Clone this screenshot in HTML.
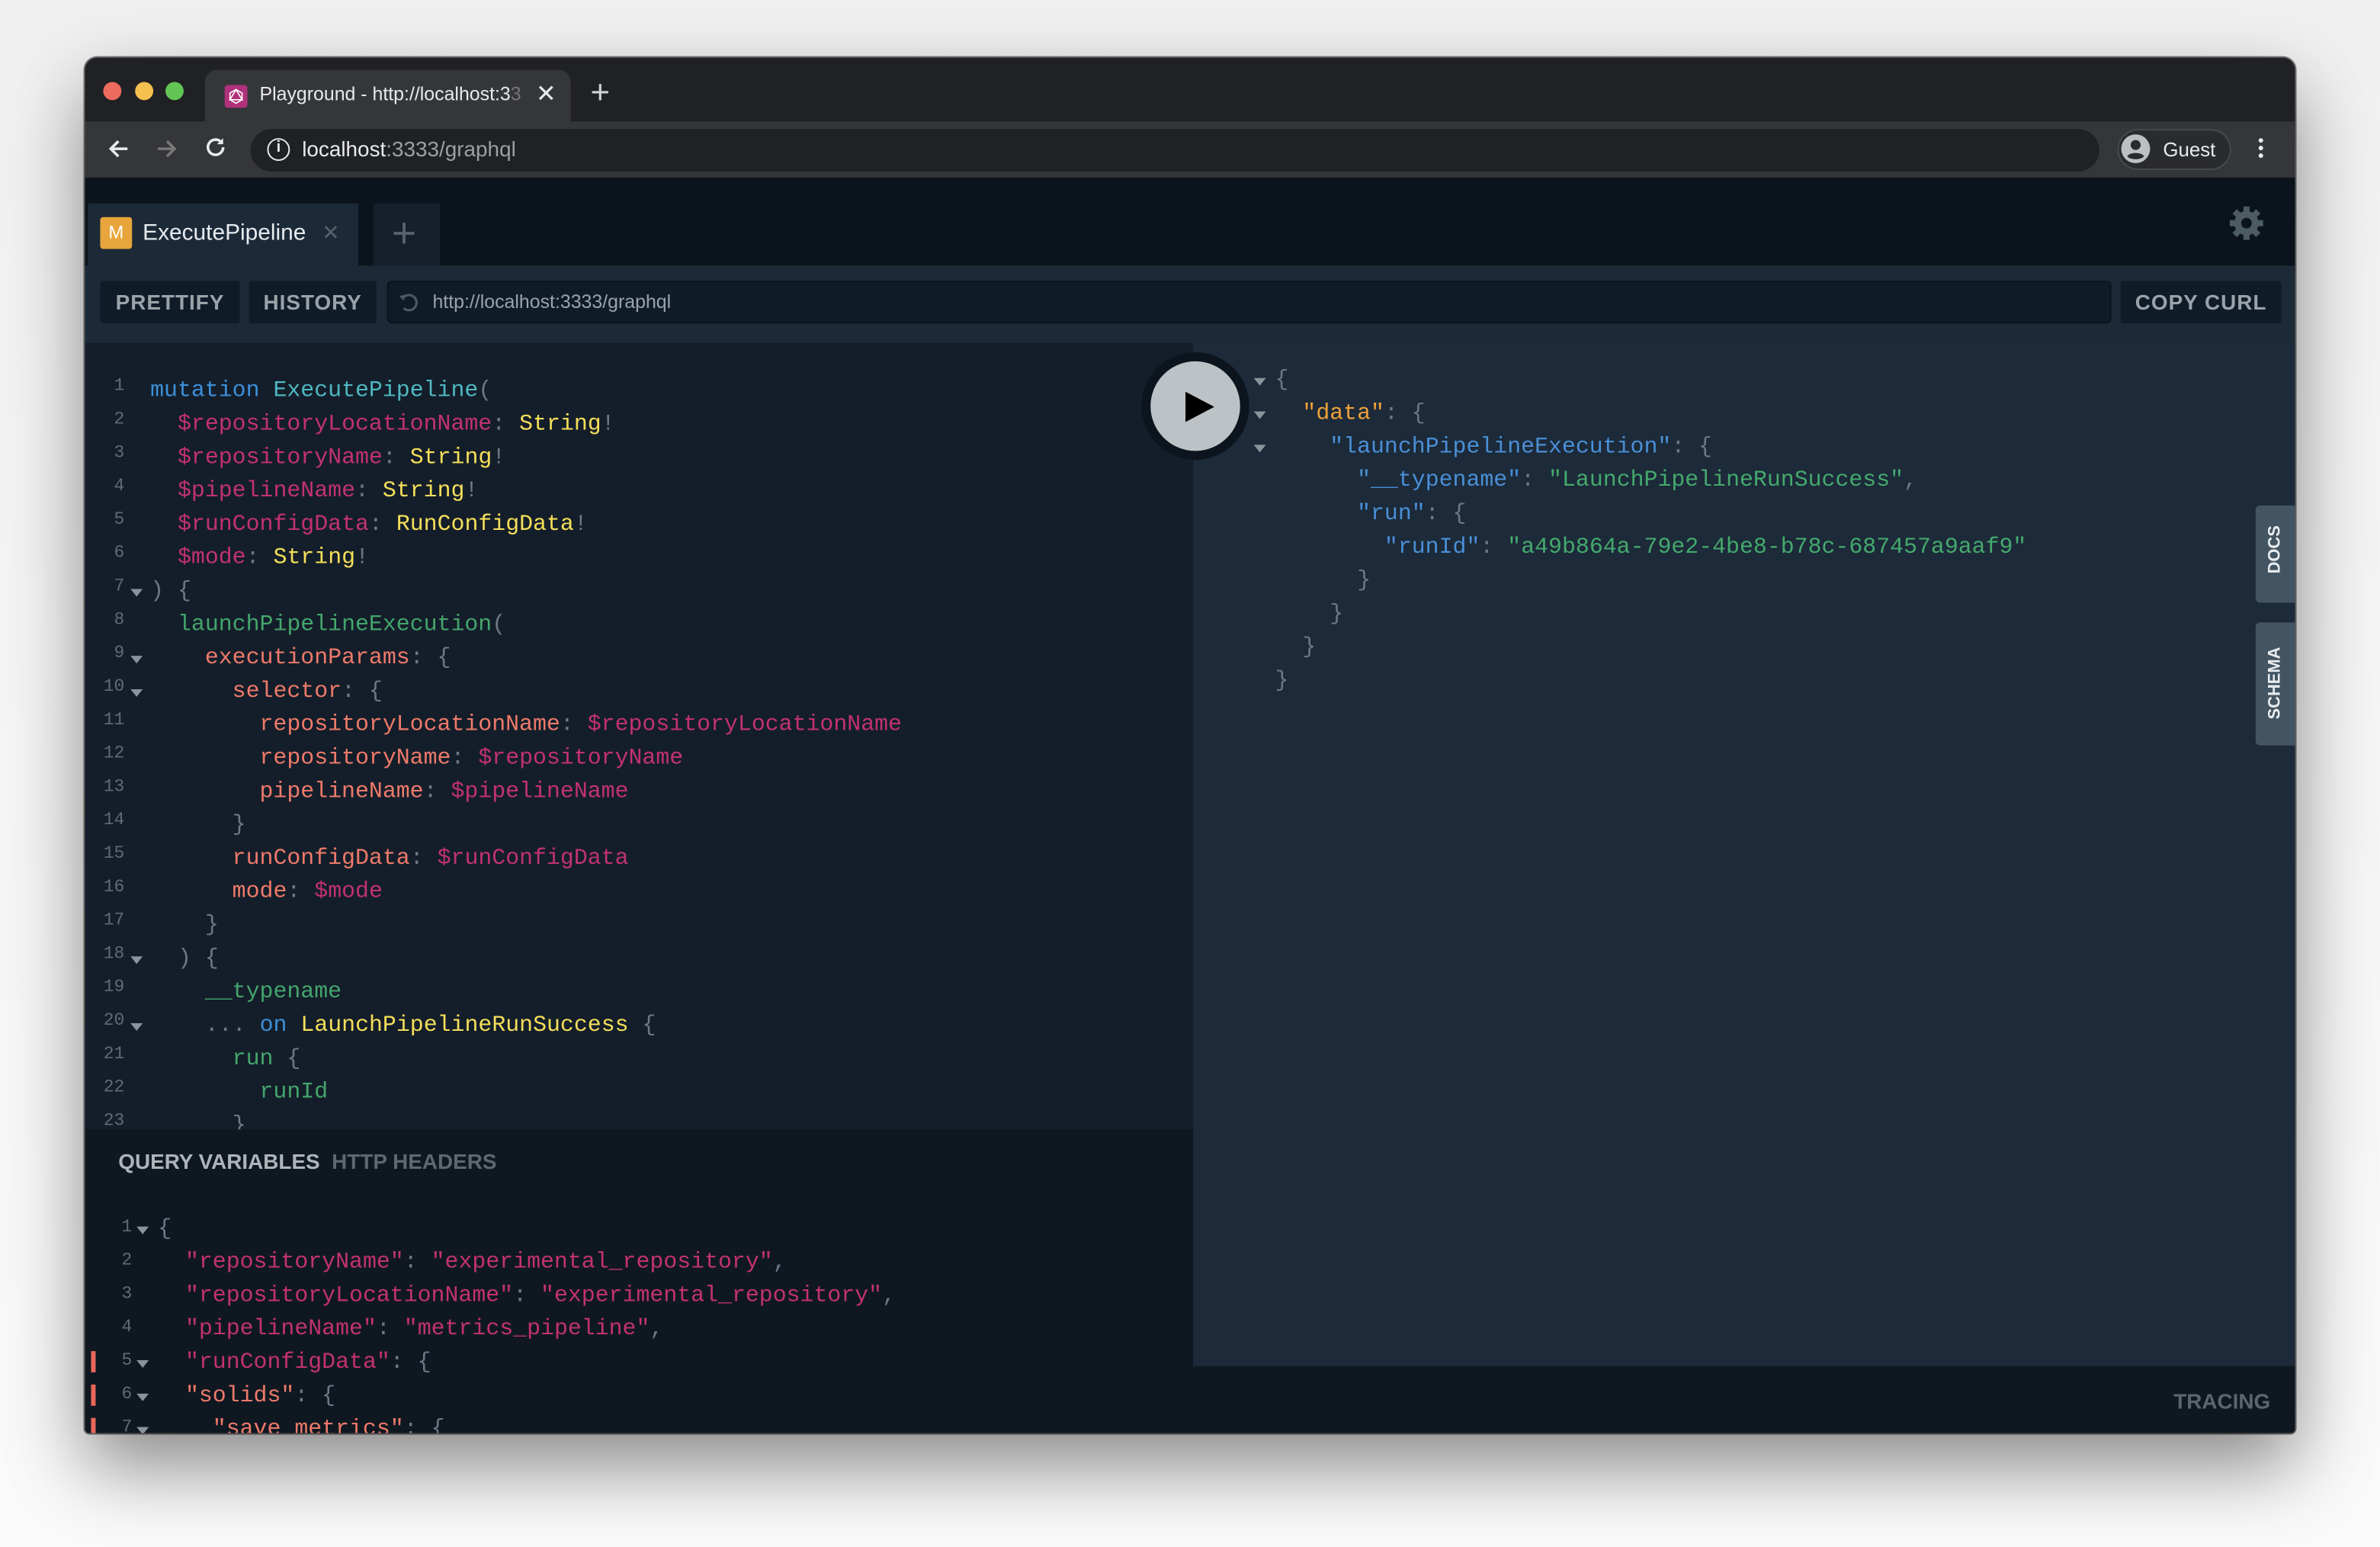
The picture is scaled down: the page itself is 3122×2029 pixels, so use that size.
<!DOCTYPE html>
<html><head><meta charset="utf-8">
<style>
*{margin:0;padding:0;box-sizing:border-box}
html,body{width:3122px;height:2028px;overflow:hidden;background:#f2f2f2}
#s{position:absolute;left:0;top:0;width:1568px;height:1019px;transform:scale(1.9911);transform-origin:0 0;font-family:"Liberation Sans",sans-serif;background:linear-gradient(#f0f0f0,#fafafa)}
.a{position:absolute}
.win{left:56px;top:38px;width:1456px;height:906px;border-radius:8px 8px 3px 3px;overflow:hidden;background:#202124;box-shadow:0 22px 50px rgba(0,0,0,.45),0 0 0 1px rgba(0,0,0,.5)}
.mono{font-family:"Liberation Mono",monospace;font-size:15px;white-space:pre;line-height:22px}
.ln{font-family:"Liberation Mono",monospace;font-size:11.5px;color:#5f6b76;width:26px;text-align:right;line-height:22px}
.k{color:#3d8fd8}.d{color:#4fb8c2}.v{color:#c2326f}.t{color:#f5df5a}.p{color:#6c7885}.f{color:#44a56c}.at{color:#ee7a6a}
.js{color:#45a96d}.jk{color:#4a8fd6}.jo{color:#eda03a}
.arr{position:absolute;width:0;height:0;border-left:4px solid transparent;border-right:4px solid transparent;border-top:5px solid #8a949c}
.btn{position:absolute;top:10px;height:28px;background:#0f1c28;border-radius:2px;color:#9aa3a9;font-weight:bold;font-size:14px;letter-spacing:.5px;line-height:28px;text-align:center}
</style></head><body><div id="s">
<div class="a win">
 <div class="a" style="left:12px;top:16px;width:12px;height:12px;border-radius:50%;background:#ed6a5e"></div>
 <div class="a" style="left:33px;top:16px;width:12px;height:12px;border-radius:50%;background:#f5bf4f"></div>
 <div class="a" style="left:53px;top:16px;width:12px;height:12px;border-radius:50%;background:#62c554"></div>
 <div class="a" style="left:79px;top:8px;width:241px;height:40px;background:#35363a;border-radius:8px 8px 0 0"></div>
 <div class="a" style="left:92px;top:18px;width:15px;height:15px;background:#b1317b;border-radius:2px"><svg width="15" height="15" viewBox="0 0 15 15"><polygon points="7.5,3 11.5,5.3 11.5,9.7 7.5,12 3.5,9.7 3.5,5.3" fill="none" stroke="#fff" stroke-width=".8"/><polygon points="7.5,3 11.5,9.7 3.5,9.7" fill="none" stroke="#fff" stroke-width=".8"/></svg></div>
 <div class="a" style="left:115px;top:17px;font-size:12.5px;color:#e8eaed;white-space:nowrap;width:174px;overflow:hidden">Playground - http://localhost:3<span style="color:#777">3</span></div>
 <div class="a" style="left:297px;top:14px;font-size:16px;color:#e8eaed">✕</div>
 <div class="a" style="left:333px;top:10px;font-size:22px;color:#cfd1d4;font-weight:300">+</div>
 <div class="a" style="left:0;top:42px;width:1456px;height:37px;background:#35363a"></div>
 <svg class="a" style="left:14px;top:52px" width="16" height="16" viewBox="0 0 16 16"><path d="M14 8H3M8 3L3 8l5 5" stroke="#e8eaed" stroke-width="1.8" fill="none"/></svg>
 <svg class="a" style="left:46px;top:52px" width="16" height="16" viewBox="0 0 16 16"><path d="M2 8h11M8 3l5 5-5 5" stroke="#777" stroke-width="1.8" fill="none"/></svg>
 <svg class="a" style="left:78px;top:51px" width="16" height="16" viewBox="0 0 16 16"><path d="M13 8a5 5 0 1 1-1.5-3.6" stroke="#e8eaed" stroke-width="1.8" fill="none"/><path d="M13 2v4h-4z" fill="#e8eaed"/></svg>
 <div class="a" style="left:109px;top:47px;width:1218px;height:28px;background:#202124;border-radius:14px"></div>
 <div class="a" style="left:120px;top:53px;width:15px;height:15px;border:1.5px solid #e8eaed;border-radius:50%;color:#e8eaed;font-size:10px;font-weight:bold;text-align:center;line-height:12px">i</div>
 <div class="a" style="left:143px;top:52px;font-size:14px;color:#e8eaed">localhost<span style="color:#9aa0a6">:3333/graphql</span></div>
 <div class="a" style="left:1339px;top:47px;width:75px;height:27px;border-radius:14px;border:1px solid #444a4f;background:#2a2b2e"></div>
 <svg class="a" style="left:1341px;top:50px" width="20" height="20" viewBox="0 0 20 20"><circle cx="10" cy="10" r="9.5" fill="#bcc0c4"/><circle cx="10" cy="7.5" r="3.3" fill="#2a2b2e"/><path d="M4.5 15c1.5-3 9.5-3 11 0c-2 2.5-9 2.5-11 0z" fill="#2a2b2e"/></svg>
 <div class="a" style="left:1369px;top:53px;font-size:13px;color:#e8eaed">Guest</div>
 <div class="a" style="left:1432px;top:53px;width:3px;height:3px;border-radius:50%;background:#e8eaed;box-shadow:0 5px 0 #e8eaed,0 10px 0 #e8eaed"></div>
 <div class="a" style="left:0;top:79px;width:1456px;height:58px;background:#0b141c"></div>
 <div class="a" style="left:2px;top:96px;width:178px;height:41px;background:#1c2a38"></div>
 <div class="a" style="left:10px;top:105px;width:21px;height:21px;background:#e8a53b;border-radius:2px;color:#fff;font-size:12px;text-align:center;line-height:21px">M</div>
 <div class="a" style="left:38px;top:107px;font-size:15px;color:#e6eaee">ExecutePipeline</div>
 <div class="a" style="left:156px;top:107px;font-size:14px;color:#55606a">✕</div>
 <div class="a" style="left:190px;top:96px;width:44px;height:41px;background:#15202b"></div>
 <div class="a" style="left:202px;top:100px;font-size:28px;color:#55616b;font-weight:300">+</div>
 <svg class="a" style="left:1412px;top:97px" width="24" height="24" viewBox="0 0 24 24"><g fill="#4d5b63"><circle cx="12" cy="12" r="8"/><rect x="10" y="1" width="4" height="22"/><rect x="1" y="10" width="22" height="4"/><rect x="10" y="1" width="4" height="22" transform="rotate(45 12 12)"/><rect x="10" y="1" width="4" height="22" transform="rotate(-45 12 12)"/></g><circle cx="12" cy="12" r="3.5" fill="#0b141c"/></svg>
 <div class="a" style="left:0;top:137px;width:1456px;height:51px;background:#1c2a38">
  <div class="btn" style="left:10px;width:92px">PRETTIFY</div>
  <div class="btn" style="left:108px;width:84px">HISTORY</div>
  <div class="a" style="left:199px;top:10px;width:1136px;height:28px;background:#0f1c28;border-radius:3px;border:1px solid #0a131b"></div>
  <svg class="a" style="left:206px;top:17px" width="15" height="15" viewBox="0 0 15 15"><path d="M3 5a5 5 0 1 1 1 6" stroke="#4d5962" stroke-width="1.6" fill="none"/><path d="M1 3l3 3 1-4z" fill="#4d5962"/></svg>
  <div class="a" style="left:229px;top:17px;font-size:12.5px;color:#9aa3a9">http://localhost:3333/graphql</div>
  <div class="btn" style="left:1341px;width:106px">COPY CURL</div>
 </div>
 <div class="a" style="left:0;top:188px;width:730px;height:518px;background:#141e2a;overflow:hidden">
  <div class="a ln" style="left:0;top:18px">1<br>2<br>3<br>4<br>5<br>6<br>7<br>8<br>9<br>10<br>11<br>12<br>13<br>14<br>15<br>16<br>17<br>18<br>19<br>20<br>21<br>22<br>23</div>
  <div class="arr" style="left:30px;top:162px"></div>
  <div class="arr" style="left:30px;top:206px"></div>
  <div class="arr" style="left:30px;top:228px"></div>
  <div class="arr" style="left:30px;top:404px"></div>
  <div class="arr" style="left:30px;top:448px"></div>
  <div class="a mono" style="left:43px;top:21px"><span class="k">mutation</span> <span class="d">ExecutePipeline</span><span class="p">(</span>
  <span class="v">$repositoryLocationName</span><span class="p">:</span> <span class="t">String</span><span class="p">!</span>
  <span class="v">$repositoryName</span><span class="p">:</span> <span class="t">String</span><span class="p">!</span>
  <span class="v">$pipelineName</span><span class="p">:</span> <span class="t">String</span><span class="p">!</span>
  <span class="v">$runConfigData</span><span class="p">:</span> <span class="t">RunConfigData</span><span class="p">!</span>
  <span class="v">$mode</span><span class="p">:</span> <span class="t">String</span><span class="p">!</span>
<span class="p">) {</span>
  <span class="f">launchPipelineExecution</span><span class="p">(</span>
    <span class="at">executionParams</span><span class="p">: {</span>
      <span class="at">selector</span><span class="p">: {</span>
        <span class="at">repositoryLocationName</span><span class="p">:</span> <span class="v">$repositoryLocationName</span>
        <span class="at">repositoryName</span><span class="p">:</span> <span class="v">$repositoryName</span>
        <span class="at">pipelineName</span><span class="p">:</span> <span class="v">$pipelineName</span>
      <span class="p">}</span>
      <span class="at">runConfigData</span><span class="p">:</span> <span class="v">$runConfigData</span>
      <span class="at">mode</span><span class="p">:</span> <span class="v">$mode</span>
    <span class="p">}</span>
  <span class="p">) {</span>
    <span class="f">__typename</span>
    <span class="p">...</span> <span class="k">on</span> <span class="t">LaunchPipelineRunSuccess</span> <span class="p">{</span>
      <span class="f">run</span> <span class="p">{</span>
        <span class="f">runId</span>
      <span class="p">}</span></div>
 </div>
 <div class="a" style="left:0;top:706px;width:730px;height:200px;background:#0f1821;overflow:hidden">
  <div class="a" style="left:22px;top:13px;font-size:14px;font-weight:bold;color:#aeb5ba">QUERY VARIABLES <span style="color:#5d6870">&nbsp;HTTP HEADERS</span></div>
  <div class="a ln" style="left:5px;top:54px">1<br>2<br>3<br>4<br>5<br>6<br>7</div>
  <div class="arr" style="left:34px;top:64px"></div>
  <div class="arr" style="left:34px;top:152px"></div>
  <div class="arr" style="left:34px;top:174px"></div>
  <div class="arr" style="left:34px;top:196px"></div>
  <div class="a" style="left:4px;top:146px;width:3px;height:14px;background:#e8675a"></div>
  <div class="a" style="left:4px;top:168px;width:3px;height:14px;background:#e8675a"></div>
  <div class="a" style="left:4px;top:190px;width:3px;height:14px;background:#e8675a"></div>
  <div class="a mono" style="left:48px;top:55px"><span class="p">{</span>
  <span class="v">"repositoryName"</span><span class="p">:</span> <span class="v">"experimental_repository"</span><span class="p">,</span>
  <span class="v">"repositoryLocationName"</span><span class="p">:</span> <span class="v">"experimental_repository"</span><span class="p">,</span>
  <span class="v">"pipelineName"</span><span class="p">:</span> <span class="v">"metrics_pipeline"</span><span class="p">,</span>
  <span class="v">"runConfigData"</span><span class="p">: {</span>
  <span class="at">"solids"</span><span class="p">: {</span>
    <span class="at">"save_metrics"</span><span class="p">: {</span></div>
 </div>
 <div class="a" style="left:730px;top:188px;width:726px;height:674px;background:#1c2a39">
  <div class="arr" style="left:40px;top:23px"></div>
  <div class="arr" style="left:40px;top:45px"></div>
  <div class="arr" style="left:40px;top:67px"></div>
  <div class="a mono" style="left:54px;top:14px"><span class="p">{</span>
  <span class="jo">"data"</span><span class="p">: {</span>
    <span class="jk">"launchPipelineExecution"</span><span class="p">: {</span>
      <span class="jk">"__typename"</span><span class="p">:</span> <span class="js">"LaunchPipelineRunSuccess"</span><span class="p">,</span>
      <span class="jk">"run"</span><span class="p">: {</span>
        <span class="jk">"runId"</span><span class="p">:</span> <span class="js">"a49b864a-79e2-4be8-b78c-687457a9aaf9"</span>
      <span class="p">}</span>
    <span class="p">}</span>
  <span class="p">}</span>
<span class="p">}</span></div>
 </div>
 <div class="a" style="left:730px;top:862px;width:726px;height:44px;background:#0f1821"></div>
 <div class="a" style="left:1376px;top:877px;font-size:14px;font-weight:bold;color:#5b666d">TRACING</div>
 <div class="a" style="left:1430px;top:295px;width:26px;height:64px;background:#435563;border-radius:3px 0 0 3px"></div>
 <div class="a" style="top:318px;font-size:11px;font-weight:bold;color:#e8ecef;transform:rotate(-90deg);width:40px;left:1423px;text-align:center">DOCS</div>
 <div class="a" style="left:1430px;top:372px;width:26px;height:81px;background:#435563;border-radius:3px 0 0 3px"></div>
 <div class="a" style="top:406px;font-size:11px;font-weight:bold;color:#e8ecef;transform:rotate(-90deg);width:60px;left:1413px;text-align:center">SCHEMA</div>
 <div class="a" style="left:696px;top:194px;width:71px;height:71px;border-radius:50%;background:#0c151d"></div>
 <div class="a" style="left:702px;top:200px;width:59px;height:59px;border-radius:50%;background:#bdc2c6"></div>
 <div class="a" style="left:725px;top:220px;width:0;height:0;border-top:10px solid transparent;border-bottom:10px solid transparent;border-left:19px solid #000"></div>
</div>
</div></body></html>
